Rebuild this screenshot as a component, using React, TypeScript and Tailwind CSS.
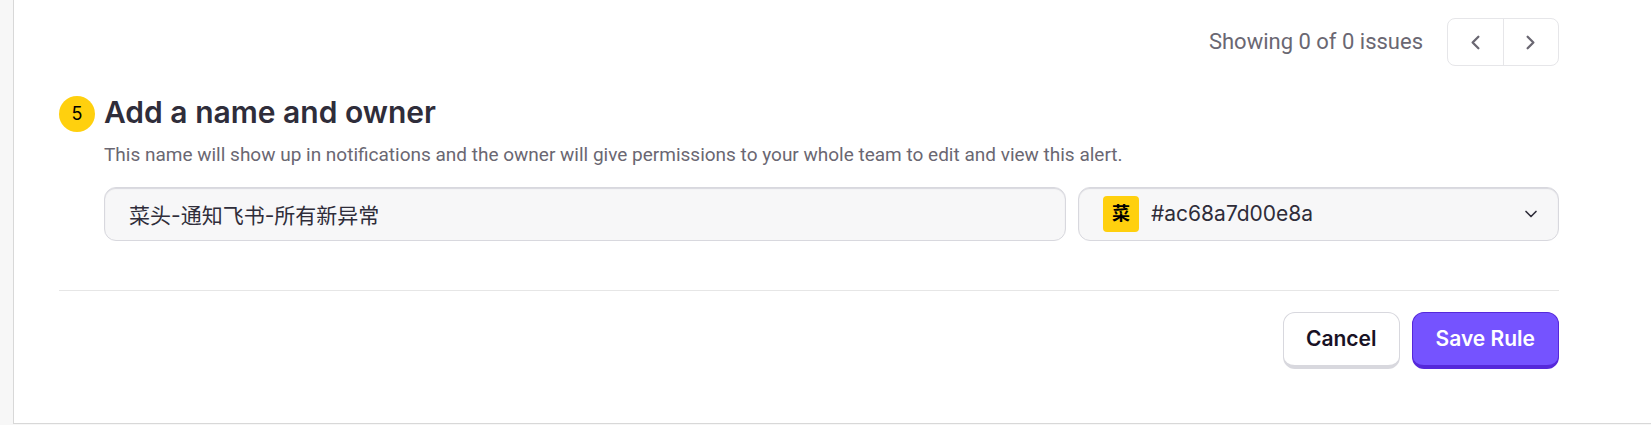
import { useState } from "react";
import { ChevronDown, ChevronLeft, ChevronRight } from "lucide-react";

const fieldClass =
  "h-[54px] w-full appearance-none rounded-xl border border-[#d8d8de] bg-[#f7f7f8] text-[21px] text-[#2f2d3a] shadow-[inset_0_1px_1px_#d8d8de] outline-none";

function Pagination() {
  return (
    <div className="flex items-center justify-end gap-6">
      <span className="font-['Roboto',sans-serif] text-[22px] leading-6 text-[#6a6772]">
        Showing 0 of 0 issues
      </span>
      <div className="flex h-12 w-28 divide-x divide-[#e6e6e9] rounded-lg border border-[#e6e6e9] text-[#6a6772]">
        <button
          type="button"
          aria-label="Previous"
          className="flex flex-1 items-center justify-center"
        >
          <ChevronLeft size={23} strokeWidth={2.4} />
        </button>
        <button
          type="button"
          aria-label="Next"
          className="flex flex-1 items-center justify-center"
        >
          <ChevronRight size={23} strokeWidth={2.4} />
        </button>
      </div>
    </div>
  );
}

export default function App() {
  const [name, setName] = useState("菜头-通知飞书-所有新异常");

  return (
    <div className="min-h-screen bg-[#f7f7f7] pl-[13px] font-['Inter','Noto_Sans_CJK_SC',sans-serif]">
      <form className="border-b border-l border-[#d8d8d8] bg-white pt-[18px] pr-[92px] pb-[54px] pl-[45px]">
        <Pagination />

        <section className="mt-7 flex gap-[9px]">
          <div className="mt-[2px] flex size-9 shrink-0 items-center justify-center rounded-full bg-[#ffd00e] text-lg text-black">
            5
          </div>
          <div className="min-w-0 flex-1">
            <h2 className="text-3xl leading-9 font-semibold text-[#2f2d3a]">
              Add a name and owner
            </h2>
            <p className="mt-[13px] font-['Roboto',sans-serif] text-[19px] leading-6 text-[#6a6772]">
              This name will show up in notifications and the owner will give
              permissions to your whole team to edit and view this alert.
            </p>
            <div className="mt-5 grid grid-cols-[2fr_1fr] gap-3">
              <input
                type="text"
                aria-label="Rule name"
                value={name}
                onChange={(e) => setName(e.target.value)}
                className={`${fieldClass} px-6`}
              />
              <div className="relative">
                <select aria-label="Owner" className={`${fieldClass} pr-12 pl-[72px]`}>
                  <option>#ac68a7d00e8a</option>
                </select>
                <span className="pointer-events-none absolute top-[9px] left-[25px] flex size-9 items-center justify-center rounded bg-[#ffd00e] text-lg font-bold text-black">
                  菜
                </span>
                <ChevronDown
                  size={20}
                  className="pointer-events-none absolute top-[17px] right-[18px] text-[#2f2d3a]"
                />
              </div>
            </div>
          </div>
        </section>

        <div className="mt-[49px] flex justify-end gap-3 border-t border-[#e6e6e6] pt-[21px] text-[21px] font-semibold">
          <button
            type="button"
            className="h-[57px] rounded-xl border border-b-4 border-[#d8d8de] bg-white px-[22px] text-[#181225]"
          >
            Cancel
          </button>
          <button
            type="submit"
            className="h-[57px] rounded-xl border border-b-4 border-[#5628da] bg-[#7553ff] px-[23px] text-white"
          >
            Save Rule
          </button>
        </div>
      </form>
    </div>
  );
}
